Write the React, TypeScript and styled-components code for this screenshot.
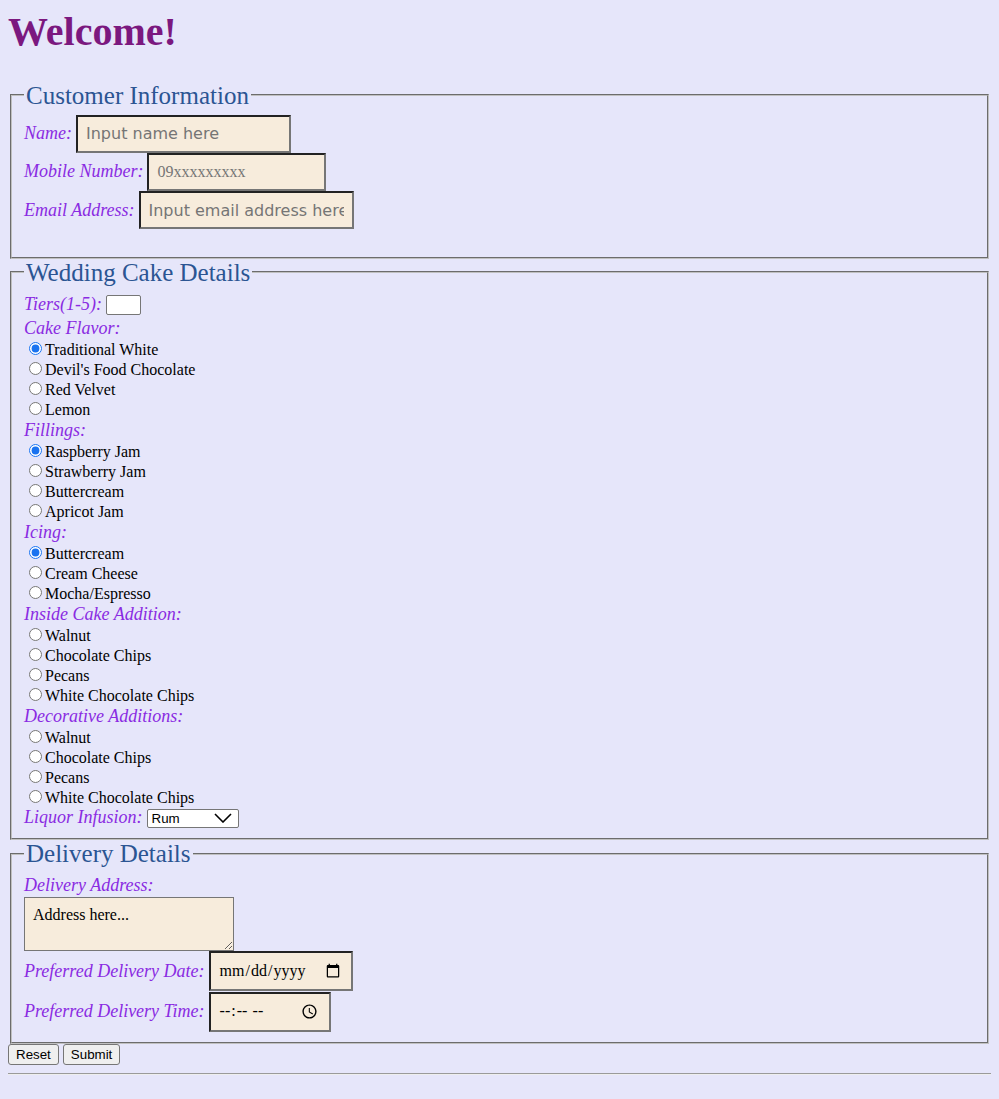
import React from "react";
import styled, { createGlobalStyle } from "styled-components";

const GlobalStyle = createGlobalStyle`
  html, body {
    background: #e6e6fa;
  }
  body {
    margin: 8px;
    font-family: "Liberation Serif", "Times New Roman", serif;
    font-size: 16px;
    color: #000;
  }
`;

const Title = styled.h1`
  margin: 0 0 0.67em;
  font-size: 40px;
  font-weight: bold;
  color: #7b187f;
  font-family: "Liberation Serif", "Times New Roman", serif;
`;

const Section = styled.fieldset<{ $padBottom?: number }>`
  margin: 0 2px;
  padding: 0.35em 0.75em ${(p) => p.$padBottom ?? 10}px;
  border: 2px groove #c0c0c0;
  min-width: 0;
`;

const Legend = styled.legend`
  padding: 0 2px;
  font-size: 25px;
  line-height: 27px;
  color: #2b5593;
`;

const Row = styled.div<{ $height: number }>`
  display: flex;
  align-items: center;
  height: ${(p) => p.$height}px;
`;

const FieldLabel = styled.label`
  font-style: italic;
  font-size: 18px;
  color: #8a2be2;
  margin-right: 4px;
  white-space: nowrap;
`;

const GroupLabel = styled.div<{ $lineHeight?: number }>`
  font-style: italic;
  font-size: 18px;
  line-height: ${(p) => p.$lineHeight ?? 22}px;
  color: #8a2be2;
`;

const TextInput = styled.input<{ $width: number; $serif?: boolean }>`
  box-sizing: border-box;
  width: ${(p) => p.$width}px;
  height: 38px;
  margin: 0;
  padding: 0 8px;
  background: #f7ecdc;
  border-width: 2px;
  border-style: solid;
  border-color: #222 #767676 #767676 #222;
  font-family: ${(p) =>
    p.$serif ? `"Liberation Serif", "Times New Roman", serif` : `"DejaVu Sans", Verdana, sans-serif`};
  font-size: 16px;
  color: #000;
  &::placeholder {
    color: #757575;
  }
`;

const DateInput = styled.input<{ $width: number }>`
  box-sizing: border-box;
  width: ${(p) => p.$width}px;
  height: 40px;
  margin: 0;
  padding: 0 8px;
  background: #f7ecdc;
  border-width: 2px;
  border-style: solid;
  border-color: #222 #767676 #767676 #222;
  font-family: "Liberation Serif", "Times New Roman", serif;
  font-size: 16px;
  color: #000;
`;

const TierInput = styled.input`
  box-sizing: border-box;
  width: 35px;
  height: 20px;
  margin: 2px 0 0;
  padding: 1px 2px;
  background: #fff;
  border: 1px solid #767676;
  border-radius: 2px;
  font-family: Arial, "Liberation Sans", sans-serif;
  font-size: 13.33px;
`;

const RadioRow = styled.label`
  display: block;
  font-size: 16px;
  color: #000;
`;

const Radio = styled.input`
  margin: 3px 3px 0 5px;
  width: 13px;
  height: 13px;
  accent-color: #1a73f0;
`;

const SelectWrap = styled.span`
  position: relative;
  display: inline-block;
  margin-top: 2px;
`;

const Select = styled.select`
  appearance: none;
  -webkit-appearance: none;
  box-sizing: border-box;
  width: 92px;
  height: 19px;
  margin: 0;
  padding: 0 4px;
  background: #fff;
  border: 1px solid #767676;
  border-radius: 2px;
  font-family: Arial, "Liberation Sans", sans-serif;
  font-size: 13.33px;
  color: #000;
`;

const Chevron = styled.svg`
  position: absolute;
  right: 7px;
  top: 4px;
  pointer-events: none;
`;

const AddressArea = styled.textarea`
  display: block;
  box-sizing: border-box;
  width: 210px;
  height: 54px;
  margin: 0;
  padding: 8px;
  background: #f7ecdc;
  border: 1px solid #767676;
  font-family: "Liberation Serif", "Times New Roman", serif;
  font-size: 16px;
  color: #000;
  &::placeholder {
    color: #000;
  }
`;

const ButtonBar = styled.div`
  display: flex;
  gap: 4px;
`;

const Button = styled.button`
  box-sizing: border-box;
  height: 21px;
  margin: 0;
  padding: 1px 7px;
  background: #efefef;
  border: 1px solid #767676;
  border-radius: 3px;
  font-family: Arial, "Liberation Sans", sans-serif;
  font-size: 13.33px;
  color: #000;
`;

const Rule = styled.hr`
  margin: 8px 0;
  border: 0;
  border-top: 1px solid #9a9a9a;
  border-bottom: 1px solid #eeeeee;
`;

type Group = { title: string; name: string; options: string[]; checked?: number };

const groups: Group[] = [
  {
    title: "Cake Flavor:",
    name: "flavor",
    options: ["Traditional White", "Devil's Food Chocolate", "Red Velvet", "Lemon"],
    checked: 0,
  },
  {
    title: "Fillings:",
    name: "filling",
    options: ["Raspberry Jam", "Strawberry Jam", "Buttercream", "Apricot Jam"],
    checked: 0,
  },
  {
    title: "Icing:",
    name: "icing",
    options: ["Buttercream", "Cream Cheese", "Mocha/Espresso"],
    checked: 0,
  },
  {
    title: "Inside Cake Addition:",
    name: "inside",
    options: ["Walnut", "Chocolate Chips", "Pecans", "White Chocolate Chips"],
  },
  {
    title: "Decorative Additions:",
    name: "decor",
    options: ["Walnut", "Chocolate Chips", "Pecans", "White Chocolate Chips"],
  },
];

export default function App() {
  return (
    <>
      <GlobalStyle />
      <Title>Welcome!</Title>
      <form onSubmit={(e) => e.preventDefault()}>
        <Section $padBottom={27}>
          <Legend>Customer Information</Legend>
          <Row $height={38.4}>
            <FieldLabel htmlFor="name">Name:</FieldLabel>
            <TextInput id="name" type="text" placeholder="Input name here" $width={215} />
          </Row>
          <Row $height={38.4}>
            <FieldLabel htmlFor="mobile">Mobile Number:</FieldLabel>
            <TextInput id="mobile" type="tel" placeholder="09xxxxxxxxx" $width={179} $serif />
          </Row>
          <Row $height={38.4}>
            <FieldLabel htmlFor="email">Email Address:</FieldLabel>
            <TextInput id="email" type="email" placeholder="Input email address here" $width={215} />
          </Row>
        </Section>

        <Section>
          <Legend>Wedding Cake Details</Legend>
          <Row $height={26}>
            <FieldLabel htmlFor="tiers">Tiers(1-5):</FieldLabel>
            <TierInput id="tiers" type="text" />
          </Row>
          {groups.map((g) => (
            <React.Fragment key={g.name}>
              <GroupLabel>{g.title}</GroupLabel>
              {g.options.map((o, i) => (
                <RadioRow key={o}>
                  <Radio type="radio" name={g.name} defaultChecked={g.checked === i} />
                  {o}
                </RadioRow>
              ))}
            </React.Fragment>
          ))}
          <Row $height={21}>
            <FieldLabel htmlFor="liquor">Liquor Infusion:</FieldLabel>
            <SelectWrap>
              <Select id="liquor" defaultValue="Rum">
                <option>Rum</option>
                <option>Brandy</option>
                <option>Whiskey</option>
                <option>None</option>
              </Select>
              <Chevron width="18" height="10" viewBox="0 0 18 10">
                <path d="M1 1 L9 9 L17 1" fill="none" stroke="#000" strokeWidth="1.6" />
              </Chevron>
            </SelectWrap>
          </Row>
        </Section>

        <Section>
          <Legend>Delivery Details</Legend>
          <GroupLabel $lineHeight={24}>Delivery Address:</GroupLabel>
          <AddressArea placeholder="Address here..." />
          <Row $height={40.5}>
            <FieldLabel htmlFor="date">Preferred Delivery Date:</FieldLabel>
            <DateInput id="date" type="date" $width={144} />
          </Row>
          <Row $height={40.5}>
            <FieldLabel htmlFor="time">Preferred Delivery Time:</FieldLabel>
            <DateInput id="time" type="time" $width={122} />
          </Row>
        </Section>

        <ButtonBar>
          <Button type="reset">Reset</Button>
          <Button type="submit">Submit</Button>
        </ButtonBar>
        <Rule />
      </form>
    </>
  );
}
